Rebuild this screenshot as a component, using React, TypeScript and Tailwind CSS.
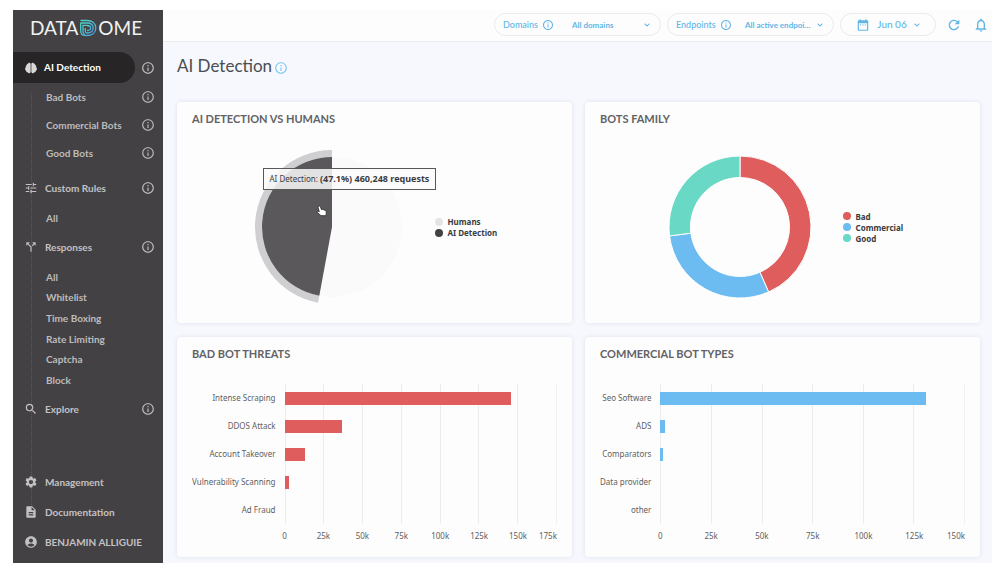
import { ReactNode } from "react";
import { IconType } from "react-icons";
import { FaBrain, FaChevronDown } from "react-icons/fa";
import {
  MdAccountCircle,
  MdCallSplit,
  MdDateRange,
  MdDescription,
  MdInfoOutline,
  MdNotificationsNone,
  MdRefresh,
  MdSearch,
  MdSettings,
  MdTune,
} from "react-icons/md";

type Slice = { label: string; value: number; color: string; dot?: string };
type Bar = { label: string; value: number };

const HUMANS: Slice[] = [
  { label: "Humans", value: 52.9, color: "#fafafb", dot: "#e4e4e6" },
  { label: "AI Detection", value: 47.1, color: "#5a585a", dot: "#434143" },
];

const FAMILIES: Slice[] = [
  { label: "Bad", value: 43.4, color: "#e05d5d" },
  { label: "Commercial", value: 29.6, color: "#6cbcf1" },
  { label: "Good", value: 27, color: "#69d8c5" },
];

const THREATS: Bar[] = [
  { label: "Intense Scraping", value: 145.5 },
  { label: "DDOS Attack", value: 37 },
  { label: "Account Takeover", value: 13 },
  { label: "Vulnerability Scanning", value: 3 },
  { label: "Ad Fraud", value: 0 },
];

const BOT_TYPES: Bar[] = [
  { label: "Seo Software", value: 131 },
  { label: "ADS", value: 2.3 },
  { label: "Comparators", value: 1.4 },
  { label: "Data provider", value: 0 },
  { label: "other", value: 0 },
];

// Angles are in percent of the full circle, clockwise from 12 o'clock
function point(r: number, pct: number) {
  const a = (pct / 100) * Math.PI * 2;
  return `${77 + r * Math.sin(a)} ${77 - r * Math.cos(a)}`;
}

function arc(inner: number, outer: number, from: number, to: number) {
  const large = to - from > 50 ? 1 : 0;
  return `M${point(outer, from)}A${outer} ${outer} 0 ${large} 1 ${point(outer, to)}L${point(inner, to)}A${inner} ${inner} 0 ${large} 0 ${point(inner, from)}Z`;
}

function InfoButton({ label }: { label: string }) {
  return (
    <button type="button" aria-label={`About ${label}`} className="shrink-0">
      <MdInfoOutline className="size-3.5" />
    </button>
  );
}

function Logo() {
  return (
    <a href="#" aria-label="DataDome" className="flex h-[42px] items-center pb-1.5 pl-[17px] text-[19px] leading-6 text-[#f1f1f1]">
      <span>DATA</span>
      <svg viewBox="0 0 18 18" className="mx-px size-[18px]" fill="none" strokeWidth="1.3">
        <defs>
          <linearGradient id="dome" x1="0" y1="0" x2="1" y2="1">
            <stop offset="0" stopColor="#4fd6c4" />
            <stop offset="1" stopColor="#4aa3e0" />
          </linearGradient>
        </defs>
        <g stroke="url(#dome)">
          <path d="M1.5 1.500h6.500c5.300 0 8.800 3 8.800 7.500s-3.500 7.500-8.800 7.500c-2.400 0-4-1.700-4-4V6.300h4" />
          <path d="M1.500 4h6.300c3.900 0 6.400 2 6.400 5s-2.500 5-6.400 5c-1 0-1.500-.7-1.500-1.700V9" />
          <path d="M8 6.500c2.400 0 3.700.9 3.700 2.500s-1.300 2.500-3.700 2.500" />
          <path d="M1.700 4v8c0 2.700 2 4.700 5 4.700" />
        </g>
      </svg>
      <span>OME</span>
    </a>
  );
}

function NavItem({ icon: Icon, label, info }: { icon: IconType; label: string; info?: boolean }) {
  return (
    <div className="flex items-center pr-2 text-[#c3c2c3]">
      <a href="#" className="flex flex-1 items-center gap-[7px] pl-[11px] font-bold">
        <Icon className="size-3.5" />
        {label}
      </a>
      {info && <InfoButton label={label} />}
    </div>
  );
}

function SubItem({ label, info }: { label: string; info?: boolean }) {
  return (
    <div className="flex items-center pr-2 pl-[33px] text-[#bdbcbd]">
      <a href="#" className="flex-1 font-bold">
        {label}
      </a>
      {info && <InfoButton label={label} />}
    </div>
  );
}

function Sidebar() {
  return (
    <aside className="relative flex w-[150px] shrink-0 flex-col bg-[#434143] text-[10px]">
      <div className="absolute top-[84px] bottom-14 left-[18px] border-l border-dotted border-[#5c5a5c]" />
      <Logo />
      <nav className="relative flex flex-1 flex-col">
        <div className="flex h-[31px] items-center justify-between pr-2 text-[#c3c2c3]">
          <a href="#" className="flex h-full w-[122px] items-center gap-[7px] rounded-r-full bg-[#272526] pl-3 font-bold text-white">
            <FaBrain className="size-3 text-[#d8d8d8]" />
            AI Detection
          </a>
          <InfoButton label="AI Detection" />
        </div>
        <div className="grid auto-rows-[28px]">
          <SubItem label="Bad Bots" info />
          <SubItem label="Commercial Bots" info />
          <SubItem label="Good Bots" info />
        </div>
        <div className="grid h-[42px]">
          <NavItem icon={MdTune} label="Custom Rules" info />
        </div>
        <div className="grid h-[18px]">
          <SubItem label="All" />
        </div>
        <div className="grid h-10">
          <NavItem icon={MdCallSplit} label="Responses" info />
        </div>
        <div className="grid h-[124px] grid-rows-6">
          <SubItem label="All" />
          <SubItem label="Whitelist" />
          <SubItem label="Time Boxing" />
          <SubItem label="Rate Limiting" />
          <SubItem label="Captcha" />
          <SubItem label="Block" />
        </div>
        <div className="grid h-9">
          <NavItem icon={MdSearch} label="Explore" info />
        </div>
        <div className="mt-auto grid auto-rows-[30px] pt-4 pb-1.5">
          <NavItem icon={MdSettings} label="Management" />
          <NavItem icon={MdDescription} label="Documentation" />
          <NavItem icon={MdAccountCircle} label="BENJAMIN ALLIGUIE" />
        </div>
      </nav>
    </aside>
  );
}

function FilterSelect({ id, label, option }: { id: string; label: string; option: string }) {
  return (
    <div className="flex h-[23px] w-[167px] items-center rounded-full border border-[#e9eaf0] px-2 text-[9px]">
      <label htmlFor={id} className="pr-1 font-medium">
        {label}
      </label>
      <MdInfoOutline className="size-3 shrink-0" />
      <div className="ml-auto grid w-20 items-center">
        <select
          id={id}
          className="col-start-1 row-start-1 w-[68px] appearance-none overflow-hidden bg-transparent text-[8px] font-bold text-ellipsis whitespace-nowrap"
        >
          <option>{option}</option>
        </select>
        <FaChevronDown className="pointer-events-none col-start-1 row-start-1 mr-0.5 size-1.5 justify-self-end" />
      </div>
    </div>
  );
}

function TopBar() {
  return (
    <header className="flex h-8 items-center justify-end gap-1.5 border-b border-[#ebecf0] bg-[#fdfdfe] pr-[3px] pb-0.5 text-[#5fb6e6]">
      <FilterSelect id="domains" label="Domains" option="All domains" />
      <FilterSelect id="endpoints" label="Endpoints" option="All active endpoints" />
      <button
        type="button"
        className="flex h-[23px] w-24 items-center justify-center gap-[7px] rounded-full border border-[#e9eaf0] text-[10px] font-medium"
      >
        <MdDateRange className="size-3.5" />
        Jun 06
        <FaChevronDown className="size-1.5" />
      </button>
      <button type="button" aria-label="Refresh" className="ml-1">
        <MdRefresh className="size-4" />
      </button>
      <button type="button" aria-label="Notifications" className="ml-[5px]">
        <MdNotificationsNone className="size-4" />
      </button>
    </header>
  );
}

function Card({ title, children }: { title: string; children: ReactNode }) {
  return (
    <section className="rounded-sm bg-[#fdfdfe] px-[15px] pt-[9px] shadow-[0_0_4px_rgba(120,130,170,0.18)]">
      <h2 className="text-[11px] leading-4 font-bold text-[#626264]">{title}</h2>
      {children}
    </section>
  );
}

function Legend({ slices }: { slices: Slice[] }) {
  return (
    <ul className="w-15 font-['Noto_Sans',sans-serif] text-[8px] leading-[11px] font-bold whitespace-nowrap text-[#3b3b3d]">
      {slices.map((s) => (
        <li key={s.label} className="flex items-center gap-[5px]">
          <span className="size-2 shrink-0 rounded-full" style={{ background: s.dot ?? s.color }} />
          {s.label}
        </li>
      ))}
    </ul>
  );
}

function HumansChart() {
  return (
    <div className="flex items-center justify-center gap-[26px] pt-[23px] pb-[19px]">
      <div className="relative">
        <svg width="154" height="154" viewBox="0 0 154 154">
          <path d={arc(0, 70, 0, 52.9)} fill={HUMANS[0].color} />
          <path d={arc(70, 77, 52.9, 100)} fill="#cfced0" />
          <path d={arc(0, 70, 52.9, 100)} fill={HUMANS[1].color} />
          {/* pointing hand */}
          <g transform="translate(61 55)" fill="#fff" stroke="#222" strokeWidth=".8" strokeLinejoin="round">
            <path d="M2.800 1.200c.8-.5 1.500 0 1.700.7l.9 2.700c.8-.5 1.400-.2 1.600.3.700-.4 1.300-.1 1.500.4.800-.3 1.500.2 1.600 1l.2 2.200c0 .9-.5 1.400-.8 2.200H4.900C4 9.400 2.400 8.300 1.300 7.400c-.7-.7.200-1.500 1-1.100l1 .5-1.200-4.300c-.1-.5.200-1 .7-1.300Z" />
          </g>
        </svg>
        <div className="absolute top-[18px] left-2 border border-[#58575a] bg-[#fafafc]/85 px-1.5 font-['Noto_Sans',sans-serif] text-[8px] leading-5 whitespace-nowrap text-[#3b3b3d]">
          AI Detection: <b className="text-[9px]">(47.1%) 460,248 requests</b>
        </div>
      </div>
      <Legend slices={HUMANS} />
    </div>
  );
}

function FamilyChart() {
  let start = 0;
  return (
    <div className="flex items-center justify-center gap-[26px] pt-[23px] pb-[19px]">
      <svg width="154" height="154" viewBox="0 0 154 154">
        {FAMILIES.map((s) => {
          const from = start;
          start += s.value;
          return <path key={s.label} d={arc(49.5, 71, from, start)} fill={s.color} stroke="#fdfdfe" />;
        })}
      </svg>
      <Legend slices={FAMILIES} />
    </div>
  );
}

function BarChart({ bars, max, color }: { bars: Bar[]; max: number; color: string }) {
  const ticks = Array.from({ length: max / 25 }, (_, i) => i * 25);
  return (
    <div className="flex gap-[9px] pt-[22px] pb-[13px] font-['Noto_Sans',sans-serif] text-[8px] text-[#5f5f61]">
      <ul className="text-right leading-[28px] whitespace-nowrap">
        {bars.map((b) => (
          <li key={b.label}>{b.label}</li>
        ))}
      </ul>
      <div className="flex-1">
        <div className="grid">
          <div className="col-start-1 row-start-1 flex border-r border-[#eff0f3]">
            {ticks.map((t) => (
              <div key={t} className="flex-1 border-l border-[#ebecf0]" />
            ))}
          </div>
          <div className="col-start-1 row-start-1">
            {bars.map((b) => (
              <div key={b.label} className="flex h-7 items-center">
                <div className="h-[13px]" style={{ width: `${(b.value / max) * 100}%`, background: color }} />
              </div>
            ))}
          </div>
        </div>
        <div className="flex pt-1 leading-4">
          {ticks.map((t, i) => (
            <div key={t} className="flex w-0 flex-1 justify-between">
              <span className="-translate-x-1/2">{t ? `${t}k` : "0"}</span>
              {i === ticks.length - 1 && <span>{max}k</span>}
            </div>
          ))}
        </div>
      </div>
    </div>
  );
}

export default function App() {
  return (
    <div className="flex min-h-screen bg-white pt-2.5 pr-2 pl-[13px] font-['Lato',sans-serif]">
      <Sidebar />
      <div className="min-w-0 flex-1 bg-[#f6f8fd]">
        <TopBar />
        <main className="pr-3 pl-3.5">
          <div className="flex h-[60px] items-start gap-0.5 pt-3">
            <h1 className="text-[17px] leading-6 text-[#4a4d52]">AI Detection</h1>
            <button type="button" aria-label="About AI Detection" className="mt-[7px] text-[#7cc6ee]">
              <MdInfoOutline className="size-3.5" />
            </button>
          </div>
          <div className="grid grid-cols-2 gap-x-[13px] gap-y-3.5 pb-1.5">
            <Card title="AI DETECTION VS HUMANS">
              <HumansChart />
            </Card>
            <Card title="BOTS FAMILY">
              <FamilyChart />
            </Card>
            <Card title="BAD BOT THREATS">
              <BarChart bars={THREATS} max={175} color="#e05d5d" />
            </Card>
            <Card title="COMMERCIAL BOT TYPES">
              <BarChart bars={BOT_TYPES} max={150} color="#6cbcf1" />
            </Card>
          </div>
        </main>
      </div>
    </div>
  );
}
